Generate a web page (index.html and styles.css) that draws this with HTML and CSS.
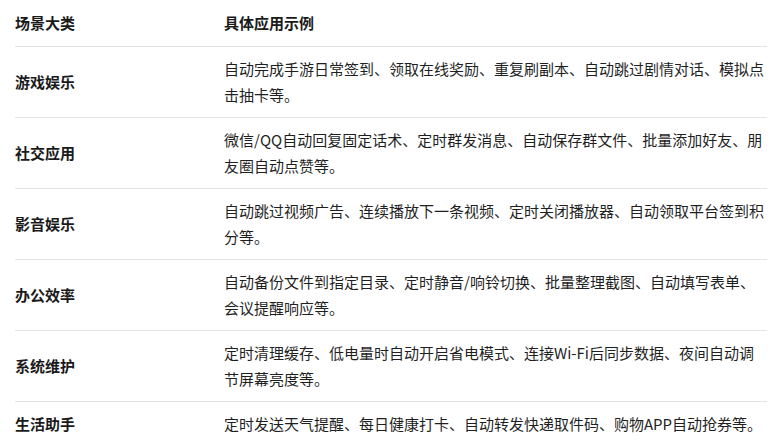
FILE: index.html
```html
<!DOCTYPE html>
<html lang="zh-CN">
<head>
<meta charset="utf-8">
<title>场景分类</title>
<link rel="stylesheet" href="styles.css">
</head>
<body>
<div class="wrap">
<table class="scene-table">
<thead>
<tr><th class="c1">场景大类</th><th class="c2">具体应用示例</th></tr>
</thead>
<tbody>
<tr><td class="c1">游戏娱乐</td><td class="c2">自动完成手游日常签到、领取在线奖励、重复刷副本、自动跳过剧情对话、模拟点击抽卡等。</td></tr>
<tr><td class="c1">社交应用</td><td class="c2">微信/QQ自动回复固定话术、定时群发消息、自动保存群文件、批量添加好友、朋友圈自动点赞等。</td></tr>
<tr><td class="c1">影音娱乐</td><td class="c2">自动跳过视频广告、连续播放下一条视频、定时关闭播放器、自动领取平台签到积分等。</td></tr>
<tr><td class="c1">办公效率</td><td class="c2">自动备份文件到指定目录、定时静音/响铃切换、批量整理截图、自动填写表单、会议提醒响应等。</td></tr>
<tr><td class="c1">系统维护</td><td class="c2">定时清理缓存、低电量时自动开启省电模式、连接Wi-Fi后同步数据、夜间自动调节屏幕亮度等。</td></tr>
<tr><td class="c1">生活助手</td><td class="c2">定时发送天气提醒、每日健康打卡、自动转发快递取件码、购物APP自动抢券等。</td></tr>
</tbody>
</table>
</div>
</body>
</html>
```

FILE: styles.css
```css
html, body {
  margin: 0;
  padding: 0;
  background: #ffffff;
}
body {
  font-family: "Noto Sans CJK SC", "Noto Sans", sans-serif;
  font-size: 15px;
  color: #1f1f1f;
}
.wrap {
  padding: 0 7px 0 15px;
}
.scene-table {
  width: 752px;
  border-collapse: collapse;
  table-layout: fixed;
}
.scene-table th,
.scene-table td {
  text-align: left;
  vertical-align: middle;
  line-height: 26px;
  padding: 9px 0;
  border-bottom: 1px solid #e3e3e3;
}
.scene-table th {
  font-weight: 700;
  padding: 10px 0;
  color: #1a1a1a;
}
.scene-table td.c1 {
  font-weight: 700;
  color: #1a1a1a;
}
.scene-table .c1 {
  width: 209px;
}
```
